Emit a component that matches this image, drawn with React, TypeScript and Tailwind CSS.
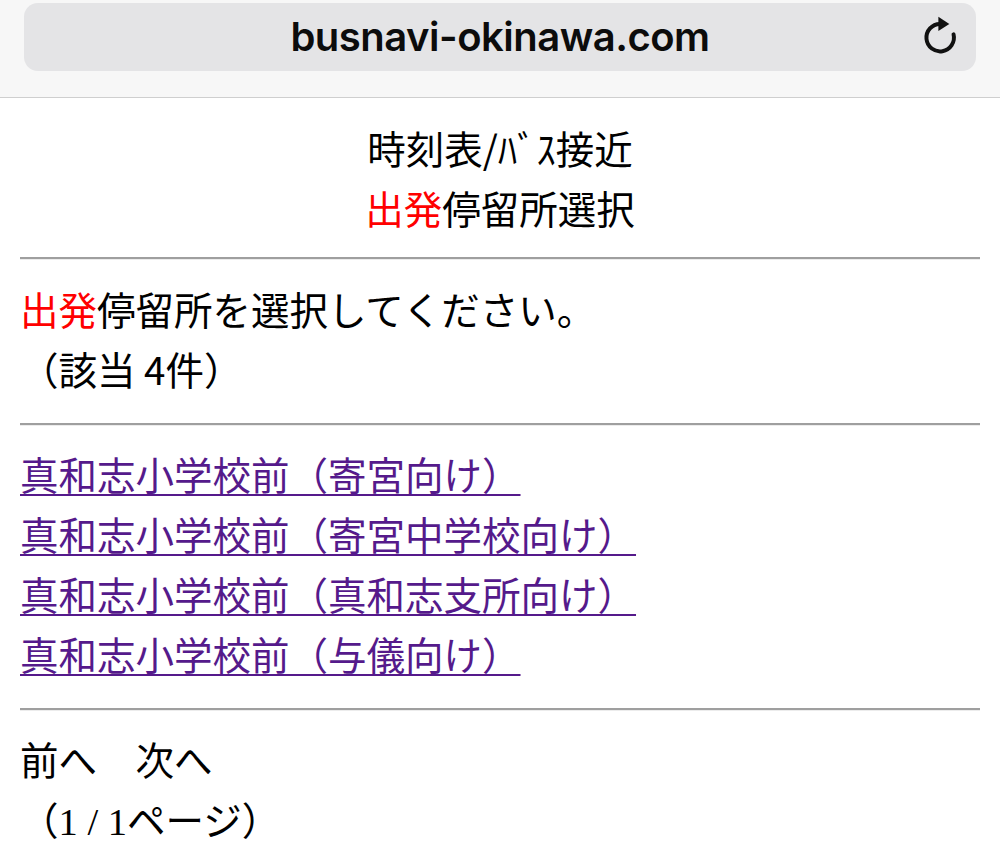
import React from 'react';

const links = [
  '真和志小学校前（寄宮向け）',
  '真和志小学校前（寄宮中学校向け）',
  '真和志小学校前（真和志支所向け）',
  '真和志小学校前（与儀向け）',
];

const Rule: React.FC<{ className?: string }> = ({ className = '' }) => (
  <div className={`h-[3px] border-t-2 border-t-[#9f9f9f] border-b border-b-[#ececec] ${className}`} />
);

const ReloadIcon: React.FC = () => (
  <svg width="44" height="44" viewBox="0 0 40 40" fill="none">
    <path d="M20 9 A12.5 12.5 0 1 0 32.3 18.5" stroke="#111" strokeWidth="3.6" strokeLinecap="round" />
    <polygon points="18.5,2.5 28.5,9 18.5,15.5" fill="#111" />
  </svg>
);

const App: React.FC = () => {
  return (
    <div className="w-[1000px] h-[855px] overflow-hidden bg-white text-black" style={{ fontFamily: '"Noto Sans CJK JP", sans-serif' }}>
      {/* safari address bar */}
      <div className="h-[98px] bg-[#f7f7f7] border-b border-[#cfcfcf] pt-[3px]">
        <div className="relative mx-[24px] h-[68px] rounded-[14px] bg-[#e4e4e6] flex items-center justify-center">
          <span className="text-[40px] font-semibold tracking-[-0.5px] text-[#0c0c0c]" style={{ fontFamily: 'Inter, "Liberation Sans", sans-serif' }}>
            busnavi-okinawa.com
          </span>
          <div className="absolute right-[14px] top-[11px]">
            <ReloadIcon />
          </div>
        </div>
      </div>

      <div className="px-[20px] pt-[19px] text-[38.5px] leading-[60px]">
        <div className="text-center">
          <div>時刻表/ﾊﾞｽ接近</div>
          <div>
            <span className="text-[#ff0000]">出発</span>停留所選択
          </div>
        </div>

        <Rule className="mt-[20px] mb-[18px]" />

        <div>
          <span className="text-[#ff0000]">出発</span>停留所を選択してください。
        </div>
        <div>（該当 4件）</div>

        <Rule className="mt-[25px] mb-[17px]" />

        <div className="flex flex-col">
          {links.map((l) => (
            <div key={l}>
              <a href="#" className="text-[#551a8b] underline decoration-[2px] underline-offset-[4px]">
                {l}
              </a>
            </div>
          ))}
        </div>

        <Rule className="mt-[25px] mb-[17px]" />

        <div>前へ　次へ</div>
        <div>
          （<span style={{ fontFamily: '"Liberation Serif", serif' }}>1 / 1</span>ページ）
        </div>
      </div>
    </div>
  );
};

export default App;
